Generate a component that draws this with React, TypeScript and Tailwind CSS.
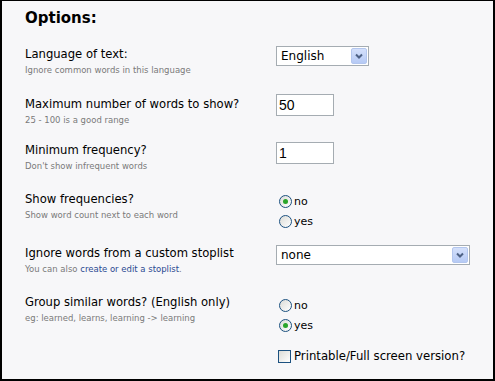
import type { ReactNode } from "react";

const FONT = "font-['DejaVu_Sans',sans-serif]";

function DropButton() {
  return (
    <span className="flex h-full w-[16px] items-center justify-center rounded-[2px] border border-[#b3c6ee] bg-linear-to-b from-[#d4e0fb] to-[#b6caf5]">
      <svg width="8" height="6" viewBox="0 0 8 6">
        <path d="M1 1.5 L4 4.5 L7 1.5" fill="none" stroke="#4d6185" strokeWidth="2" />
      </svg>
    </span>
  );
}

function Select({ value, width }: { value: string; width: string }) {
  return (
    <div className={`flex h-[20px] ${width} items-stretch border border-[#a5acb2] bg-white p-px`}>
      <span className="flex-1 pl-[3px] text-[12px] leading-[16px] text-black">{value}</span>
      <DropButton />
    </div>
  );
}

function NumInput({ value }: { value: string }) {
  return (
    <div className="flex h-[22px] w-[58px] items-center border border-[#a5acb2] bg-white pl-[2px] font-['Liberation_Sans',sans-serif] text-[14px] leading-none text-black">
      {value}
    </div>
  );
}

function Radio({ label, checked }: { label: string; checked?: boolean }) {
  return (
    <div className="flex h-[20px] items-center">
      <span className="ml-[3px] flex h-[13px] w-[13px] items-center justify-center rounded-full border border-[#1c5180] bg-linear-to-br from-[#dcdcd7] to-white">
        {checked && <span className="h-[5px] w-[5px] rounded-full bg-[#2aa52a]" />}
      </span>
      <span className="ml-[2px] mt-[2px] text-[11px] leading-[14px] text-black">{label}</span>
    </div>
  );
}

function Row({ label, hint, h, children }: { label: string; hint: ReactNode; h: string; children: ReactNode }) {
  return (
    <div className={`grid ${h} grid-cols-[251px_1fr]`}>
      <div>
        <div className="text-[11.6px] leading-[16px] text-black">{label}</div>
        <div className="mt-[2px] text-[8.5px] leading-[12px] text-[#7a7a7a]">{hint}</div>
      </div>
      <div>{children}</div>
    </div>
  );
}

export default function App() {
  return (
    <div className={`h-[381px] w-[495px] overflow-hidden border-2 border-t border-black bg-[#f7f7f9] pl-[23px] pt-[8px] ${FONT}`}>
      <h2 className="h-[37px] text-[15px] font-bold leading-[18px] text-black">Options:</h2>

      <Row label="Language of text:" hint="Ignore common words in this language" h="h-[50px]">
        <Select value="English" width="w-[93px]" />
      </Row>

      <Row label="Maximum number of words to show?" hint="25 - 100 is a good range" h="h-[46px]">
        <div className="-mt-[2px]">
          <NumInput value="50" />
        </div>
      </Row>

      <Row label="Minimum frequency?" hint="Don't show infrequent words" h="h-[49px]">
        <NumInput value="1" />
      </Row>

      <Row label="Show frequencies?" hint="Show word count next to each word" h="h-[54px]">
        <Radio label="no" checked />
        <Radio label="yes" />
      </Row>

      <Row
        label="Ignore words from a custom stoplist"
        hint={
          <>
            You can also <a className="text-[#2b4a92]">create or edit a stoplist</a>.
          </>
        }
        h="h-[49px]"
      >
        <Select value="none" width="w-[194px]" />
      </Row>

      <Row label="Group similar words? (English only)" hint="eg: learned, learns, learning -> learning" h="h-[55px]">
        <div className="mt-[1px]">
          <Radio label="no" />
          <Radio label="yes" checked />
        </div>
      </Row>

      <div className="grid grid-cols-[251px_1fr]">
        <div />
        <label className="flex items-center">
          <span className="ml-[2px] h-[13px] w-[13px] border border-[#1c5180] bg-linear-to-br from-[#dcdcd7] to-white" />
          <span className="ml-[3px] text-[11.7px] leading-[14px] text-black">Printable/Full screen version?</span>
        </label>
      </div>
    </div>
  );
}
